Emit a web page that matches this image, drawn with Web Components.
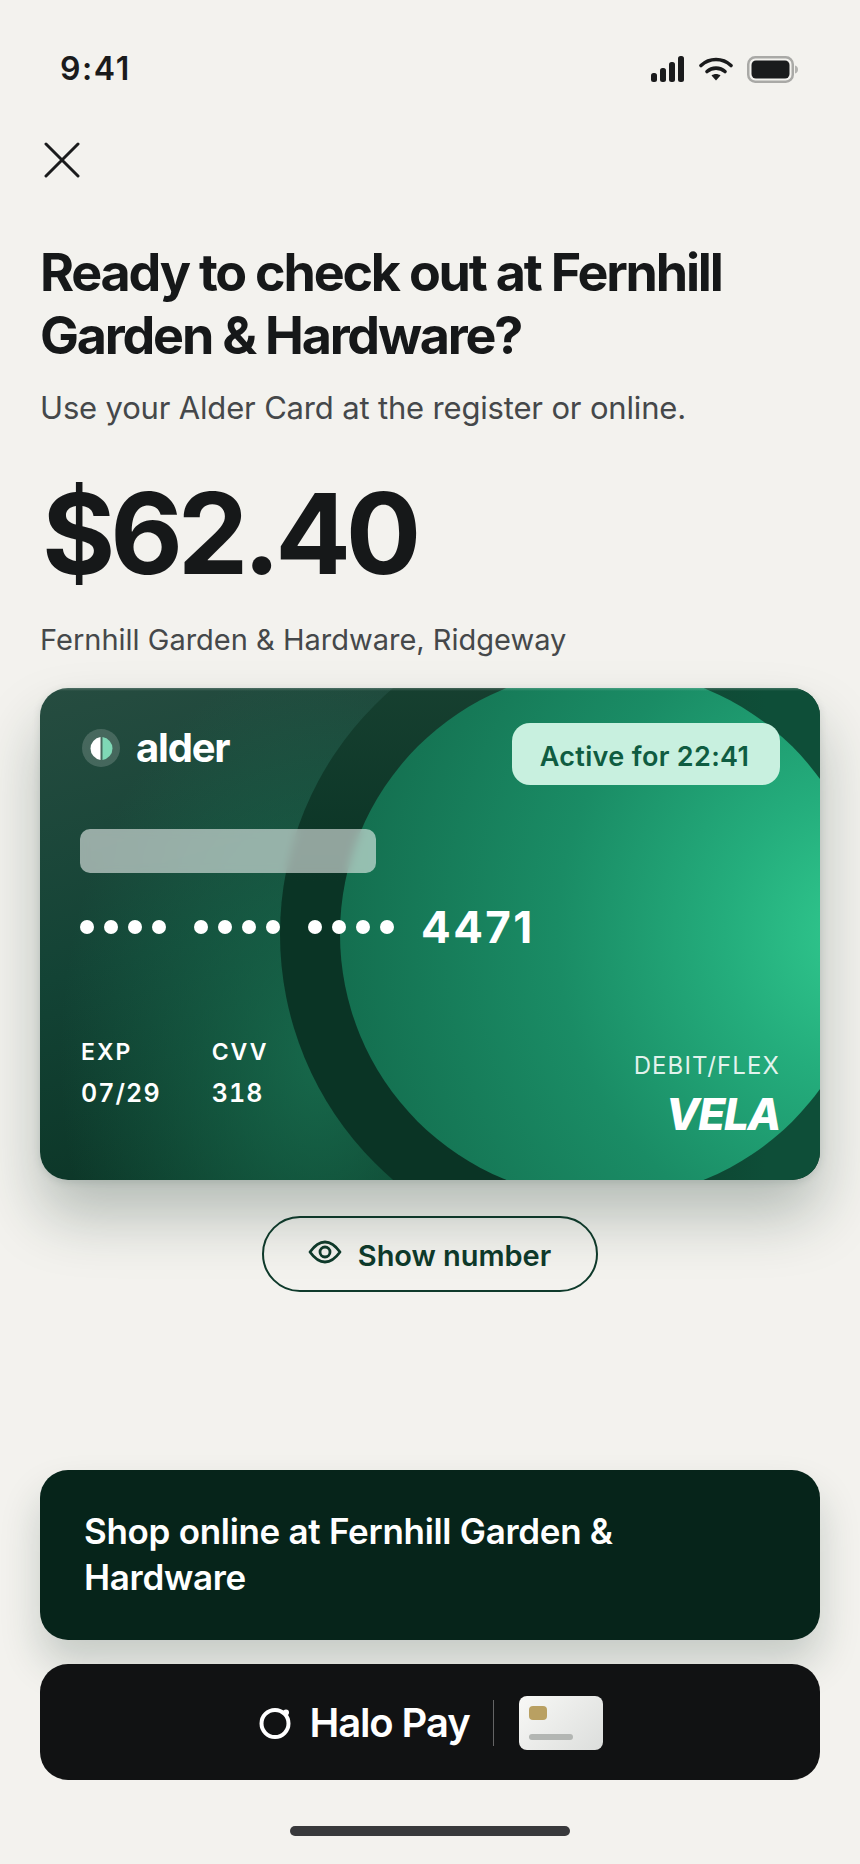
<!DOCTYPE html>
<html lang="en">
<head>
<meta charset="utf-8">
<title>Alder Card</title>
<style>
  html, body { margin: 0; padding: 0; background: #f3f2ee; }
  body { font-family: Inter, "Liberation Sans", sans-serif; color: #161819; }
</style>
</head>
<body>
<checkout-screen>
  <status-bar></status-bar>
  <close-button></close-button>
  <checkout-summary
    amount="$62.40"
    place="Fernhill Garden &amp; Hardware, Ridgeway"
    note="Use your Alder Card at the register or online.">Ready to check out at Fernhill Garden &amp; Hardware?</checkout-summary>
  <alder-card timer="22:41" last4="4471" exp="07/29" cvv="318"></alder-card>
  <show-number></show-number>
  <shop-link slot="footer">Shop online at Fernhill Garden &amp; Hardware</shop-link>
  <halo-pay slot="footer"></halo-pay>
  <home-bar slot="footer"></home-bar>
</checkout-screen>

<script>
// Small helper: every element here is just a shadow root filled from a string
class ShadowEl extends HTMLElement {
  constructor() {
    super();
    this.attachShadow({ mode: "open" });
  }
  attr(name, fallback = "") {
    return this.getAttribute(name) ?? fallback;
  }
  markup() { return ""; }
  connectedCallback() {
    this.shadowRoot.innerHTML = this.markup();
  }
}

class CheckoutScreen extends ShadowEl {
  markup() {
    return `
      <style>
        :host { display: flex; flex-direction: column; box-sizing: border-box; height: 1864px; overflow: hidden; }
        .footer { margin-top: auto; display: flex; flex-direction: column; }
      </style>
      <slot></slot>
      <div class="footer"><slot name="footer"></slot></div>`;
  }
}

class StatusBar extends ShadowEl {
  markup() {
    return `
      <style>
        :host { display: flex; align-items: center; justify-content: space-between; height: 28px; padding: 55px 62px 0 60px; }
        .time { font: 600 32px/28px Inter, sans-serif; letter-spacing: 1.6px; color: #1a1b1c; }
        .icons { display: flex; align-items: center; gap: 14px; }
        svg { display: block; }
      </style>
      <span class="time">9:41</span>
      <div class="icons">
        <svg width="35" height="26" viewBox="0 0 35 26" fill="#1a1b1c">
          <rect x="1" y="17" width="6" height="9" rx="2.5"/>
          <rect x="10" y="12" width="6" height="14" rx="2.5"/>
          <rect x="19" y="6" width="6" height="20" rx="2.5"/>
          <rect x="28" y="0" width="6" height="26" rx="2.5"/>
        </svg>
        <svg width="34" height="24" viewBox="0 0 34 24" fill="none" stroke="#1a1b1c" stroke-width="3.6" stroke-linecap="round">
          <path d="M2 8.5C10.500 .5 23.500 .5 32 8.500"/>
          <path d="M8 14.500C13 10 21 10 26 14.500"/>
          <path d="M17 23.500l-4.500-5c2.500-2 6.500-2 9 0z" fill="#1a1b1c" stroke="none"/>
        </svg>
        <svg width="51" height="27" viewBox="0 0 51 27">
          <rect x="1.250" y="1.250" width="44.500" height="24.500" rx="7" fill="none" stroke="#a9a9a6" stroke-width="2.500"/>
          <rect x="4.500" y="4.500" width="38" height="18" rx="4.500" fill="#1a1b1c"/>
          <path d="M48 9.500c2 .5 3 2 3 4s-1 3.500-3 4z" fill="#b3b3b0"/>
        </svg>
      </div>`;
  }
}

class CloseButton extends ShadowEl {
  markup() {
    return `
      <style>
        :host { display: block; padding: 59px 0 0 44px; height: 36px; }
        svg { display: block; }
      </style>
      <svg width="36" height="36" viewBox="0 0 36 36" fill="none" stroke="#1a1b1c" stroke-width="3" stroke-linecap="round">
        <path d="M2 2l32 32M34 2L2 34"/>
      </svg>`;
  }
}

class CheckoutSummary extends ShadowEl {
  markup() {
    return `
      <style>
        :host { display: block; padding: 63px 40px 0; }
        h1 { margin: 0; font: 700 52px/63px Inter, sans-serif; letter-spacing: -2.2px; color: #161819; max-width: 720px; }
        .note { margin: 21px 0 0; font: 400 31px/40px Inter, sans-serif; letter-spacing: -.17px; color: #45484a; }
        .amount { margin: 41px 0 0 2px; font: 700 112px/128px Inter, sans-serif; letter-spacing: -5.2px; color: #161819; }
        .place { margin: 23px 0 0; font: 400 29px/40px Inter, sans-serif; color: #45484a; }
      </style>
      <h1><slot></slot></h1>
      <p class="note">${this.attr("note")}</p>
      <div class="amount">${this.attr("amount")}</div>
      <p class="place">${this.attr("place").replace(/&/g, "&amp;")}</p>`;
  }
}

class AlderCard extends ShadowEl {
  markup() {
    const dots = `<span class="group"><i></i><i></i><i></i><i></i></span>`;
    return `
      <style>
        :host { display: block; position: relative; box-sizing: border-box; height: 492px; margin: 28px 40px 0; border-radius: 28px;
          box-shadow: 0 36px 60px rgba(20, 50, 38, .28), 0 2px 8px rgba(20, 50, 38, .12); color: #fff; }
        .face { position: absolute; inset: 0; border-radius: 28px; overflow: hidden;
          background:
            radial-gradient(260px 400px at 280px 370px, rgba(24,112,80,.85), rgba(24,112,80,0) 100%),
            linear-gradient(165deg, #264c40 0%, #134335 42%, #072c1d 100%); }
        .ring, .disc { position: absolute; border-radius: 50%; }
        .ring { left: 240px; top: -78px; width: 648px; height: 648px;
          background:
            linear-gradient(90deg, rgba(14,78,56,0) 40%, #0e4e38 75%),
            linear-gradient(180deg, #1b4434 0%, #0a3425 42%, #0a3425 100%); }
        .disc { left: 300px; top: -19px; width: 530px; height: 530px;
          background: radial-gradient(560px 580px at 525px 265px, #31ca8f 0%, #24ad7c 25%, #1a8c65 55%, #136a4c 100%); }
        .gloss { position: absolute; left: 0; right: 0; top: 0; height: 3px; background: linear-gradient(180deg, rgba(255,255,255,.2), rgba(255,255,255,0)); }
        .content { position: relative; box-sizing: border-box; height: 100%; padding: 35px 40px 0 40px; display: flex; flex-direction: column; }
        .top { display: flex; justify-content: space-between; align-items: flex-start; }
        .brand { display: flex; align-items: center; gap: 16px; margin: 0 0 0 2px; }
        .mark { width: 38px; height: 38px; border-radius: 50%; background: rgba(255,255,255,.17); display: grid; place-items: center; }
        .word { font: 700 40px/50px Inter, sans-serif; letter-spacing: -1.2px; }
        .pill { box-sizing: border-box; width: 268px; height: 62px; border-radius: 18px; background: #c8f0df; color: #0f5c41;
          font: 600 27px/62px Inter, sans-serif; text-align: center; padding: 3px 3px 0 0; letter-spacing: .33px; }
        .bar { width: 296px; height: 44px; margin-top: 44px; border-radius: 10px; background: rgba(255,255,255,.55); backdrop-filter: blur(4px); }
        .number { display: flex; align-items: center; margin-top: 26px; height: 56px; }
        .group { display: flex; gap: 10px; margin-right: 28px; }
        .group i { width: 14px; height: 14px; border-radius: 50%; background: #fff; }
        .last { font: 700 44px/56px Inter, sans-serif; letter-spacing: 2.4px; margin-left: -1px; }
        .bottom { display: flex; justify-content: space-between; align-items: flex-end; margin-top: 82px; }
        .meta { display: flex; gap: 51px; margin-left: 1px; }
        .meta div { display: flex; flex-direction: column; gap: 11px; }
        .meta b { font: 600 23px/30px Inter, sans-serif; letter-spacing: 2px; }
        .meta span { font: 600 25px/30px Inter, sans-serif; letter-spacing: 1.1px; font-variant-numeric: tabular-nums; }
        .scheme { text-align: right; margin-bottom: -31px; }
        .type { font: 400 24px/30px Inter, sans-serif; letter-spacing: 1.1px; color: rgba(255,255,255,.88); }
        .vela { font: italic 800 44px/50px Inter, sans-serif; letter-spacing: -1.4px; margin-top: 8px; }
      </style>
      <div class="face"><div class="ring"></div><div class="disc"></div><div class="gloss"></div></div>
      <div class="content">
        <div class="top">
          <div class="brand">
            <div class="mark">
              <svg width="23" height="23" viewBox="0 0 23 23">
                <path d="M10.500 .1A11.500 11.500 0 0 0 10.500 22.900z" fill="#fff"/>
                <path d="M12.500 .1A11.500 11.500 0 0 1 12.500 22.900z" fill="#7fd8b6"/>
              </svg>
            </div>
            <span class="word">alder</span>
          </div>
          <div class="pill">Active for ${this.attr("timer")}</div>
        </div>
        <div class="bar"></div>
        <div class="number">${dots}${dots}${dots}<span class="last">${this.attr("last4")}</span></div>
        <div class="bottom">
          <div class="meta">
            <div><b>EXP</b><span>${this.attr("exp")}</span></div>
            <div><b>CVV</b><span>${this.attr("cvv")}</span></div>
          </div>
          <div class="scheme">
            <div class="type">DEBIT/FLEX</div>
            <div class="vela">VELA</div>
          </div>
        </div>
      </div>`;
  }
}

class ShowNumber extends ShadowEl {
  markup() {
    return `
      <style>
        :host { display: flex; justify-content: center; margin-top: 36px; }
        button { display: flex; align-items: center; justify-content: center; gap: 16px; box-sizing: border-box; width: 336px; height: 76px; padding: 0 1px 0 0;
          border: 2px solid #0f3a2b; border-radius: 38px; background: transparent; color: #0f3a2b; font: 600 29px/36px Inter, sans-serif; letter-spacing: -.05px; }
        svg { display: block; margin-top: -5px; }
        span { margin-top: 4px; }
      </style>
      <button>
        <svg width="34" height="24" viewBox="0 0 34 24" fill="none" stroke="#0f3a2b" stroke-width="2.800" stroke-linejoin="round">
          <path d="M2 12C7 5 11.500 2 17 2s10 3 15 10c-5 7-9.500 10-15 10S7 19 2 12z"/>
          <circle cx="17" cy="12" r="5"/>
        </svg>
        <span>Show number</span>
      </button>`;
  }
}

class ShopLink extends ShadowEl {
  markup() {
    return `
      <style>
        :host { display: block; box-sizing: border-box; height: 170px; margin: 0 40px; padding: 38px 44px 0; border-radius: 28px; background: #06241a;
          box-shadow: 0 24px 40px rgba(20, 50, 38, .2); color: #fff; font: 600 35px/46px Inter, sans-serif; letter-spacing: -.3px; }
        div { max-width: 560px; }
      </style>
      <div><slot></slot></div>`;
  }
}

class HaloPay extends ShadowEl {
  markup() {
    return `
      <style>
        :host { display: flex; align-items: center; justify-content: center; box-sizing: border-box; height: 116px; padding-top: 2px; margin: 24px 40px 0; border-radius: 28px;
          background: #111213; color: #fff; position: relative; }
        svg { display: block; margin-left: 2px; }
        .name { font: 600 40px/50px Inter, sans-serif; letter-spacing: -1.1px; margin-left: 18px; }
        .rule { width: 1px; height: 46px; margin: 0 25px 0 23px; background: rgba(255,255,255,.35); }
        .mini { position: relative; width: 84px; height: 54px; border-radius: 8px; background: linear-gradient(135deg, #f8f8f6, #dcdedc); }
        .chip { position: absolute; left: 10px; top: 10px; width: 18px; height: 14px; border-radius: 4px; background: #b9a062; }
        .strip { position: absolute; left: 10px; top: 38px; width: 44px; height: 6px; border-radius: 3px; background: #b3b6b3; }
      </style>
      <svg width="32" height="32" viewBox="0 0 32 32" fill="none">
        <circle cx="16" cy="16.500" r="13.500" stroke="#fff" stroke-width="4"/>
        <circle cx="27" cy="5.500" r="3" fill="#fff"/>
      </svg>
      <span class="name">Halo Pay</span>
      <span class="rule"></span>
      <span class="mini"><span class="chip"></span><span class="strip"></span></span>`;
  }
}

class HomeBar extends ShadowEl {
  markup() {
    return `
      <style>
        :host { display: block; padding: 46px 290px 28px; }
        div { height: 10px; border-radius: 5px; background: #38393b; }
      </style>
      <div></div>`;
  }
}

customElements.define("checkout-screen", CheckoutScreen);
customElements.define("status-bar", StatusBar);
customElements.define("close-button", CloseButton);
customElements.define("checkout-summary", CheckoutSummary);
customElements.define("alder-card", AlderCard);
customElements.define("show-number", ShowNumber);
customElements.define("shop-link", ShopLink);
customElements.define("halo-pay", HaloPay);
customElements.define("home-bar", HomeBar);
</script>
</body>
</html>
